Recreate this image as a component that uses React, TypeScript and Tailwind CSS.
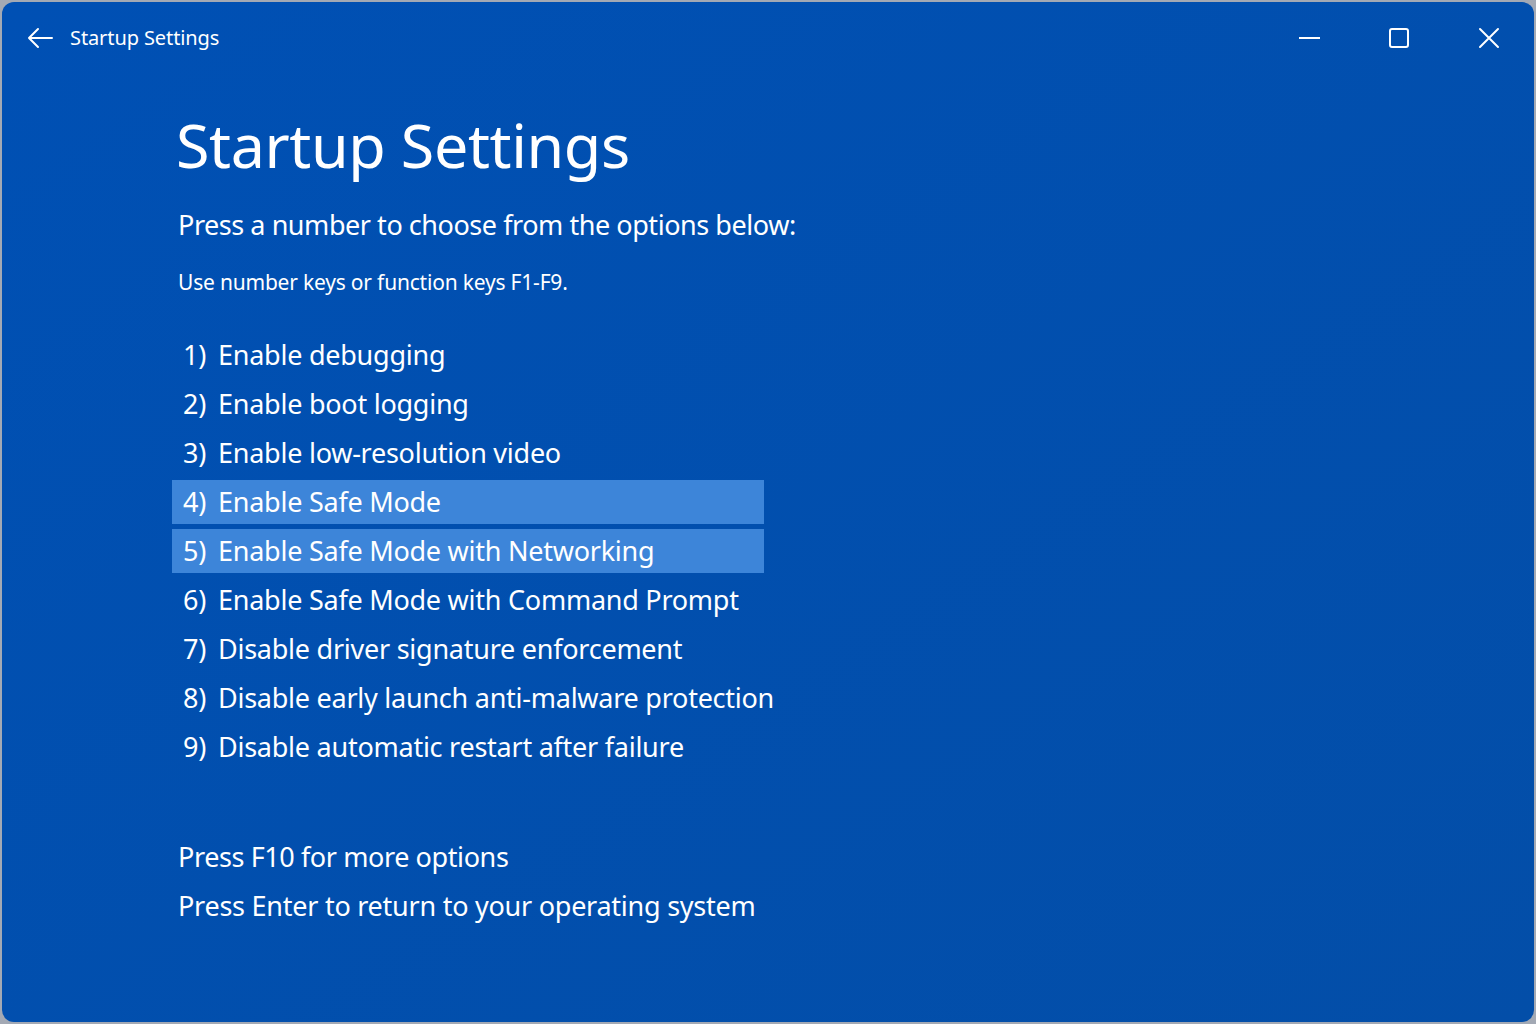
import React from 'react';

const options = [
  'Enable debugging',
  'Enable boot logging',
  'Enable low-resolution video',
  'Enable Safe Mode',
  'Enable Safe Mode with Networking',
  'Enable Safe Mode with Command Prompt',
  'Disable driver signature enforcement',
  'Disable early launch anti-malware protection',
  'Disable automatic restart after failure',
];

const highlighted = [4, 5];

export default function App() {
  return (
    <div className="w-[1536px] h-[1024px] bg-[#a3a9b4] p-[2px] font-['Noto_Sans',sans-serif]">
      <div className="w-full h-full rounded-[12px] bg-gradient-to-br from-[#0050b4] to-[#034ea8] text-white flex flex-col overflow-hidden">
        {/* title bar */}
        <div className="h-[72px] flex items-center pl-[24px]">
          <svg width="28" height="24" viewBox="0 0 28 24" fill="none" stroke="white" strokeWidth="2" strokeLinecap="round" strokeLinejoin="round">
            <path d="M26 12H3M12 3l-9 9 9 9" />
          </svg>
          <span className="ml-[16px] text-[20px] tracking-[-0.1px]">Startup Settings</span>
          <div className="ml-auto flex items-center h-full">
            <div className="w-[90px] h-full flex items-center justify-center">
              <div className="w-[21px] h-[2px] bg-white" />
            </div>
            <div className="w-[90px] h-full flex items-center justify-center">
              <div className="w-[20px] h-[20px] border-2 border-white rounded-[3px]" />
            </div>
            <div className="w-[90px] h-full flex items-center justify-center">
              <svg width="22" height="22" viewBox="0 0 22 22" stroke="white" strokeWidth="2" strokeLinecap="round">
                <path d="M2 2l18 18M20 2L2 20" />
              </svg>
            </div>
          </div>
        </div>

        <div className="pl-[170px] flex flex-col">
          <h1 className="text-[61px] leading-none tracking-[-0.4px] mt-[40px] ml-[4px]">Startup Settings</h1>
          <p className="text-[27px] leading-none mt-[36px] ml-[6px] tracking-[-0.45px]">Press a number to choose from the options below:</p>
          <p className="text-[21px] leading-none mt-[34px] ml-[6px] tracking-[-0.2px]">Use number keys or function keys F1-F9.</p>

          <div className="mt-[40px] flex flex-col gap-[5px] w-[592px]">
            {options.map((o, i) => {
              const n = i + 1;
              const on = highlighted.includes(n);
              return (
                <div
                  key={n}
                  className={`h-[44px] flex items-center pl-[11px] text-[27px] tracking-[-0.25px] whitespace-nowrap ${on ? 'bg-[#3d85d9]' : ''}`}
                >
                  <span className="w-[35px] shrink-0">{n})</span>
                  <span>{o}</span>
                </div>
              );
            })}
          </div>

          <p className="text-[27px] leading-none mt-[74px] ml-[6px] tracking-[-0.4px]">Press F10 for more options</p>
          <p className="text-[27px] leading-none mt-[22px] ml-[6px] tracking-[-0.25px]">Press Enter to return to your operating system</p>
        </div>
      </div>
    </div>
  );
}
